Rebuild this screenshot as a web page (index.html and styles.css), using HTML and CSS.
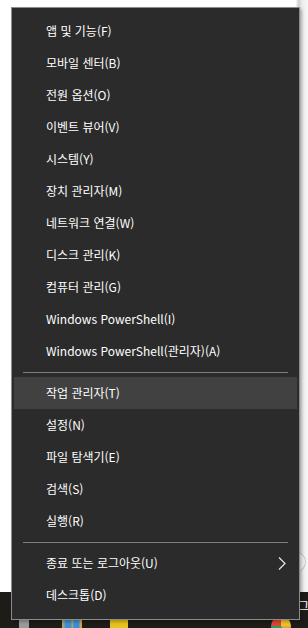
FILE: index.html
```html
<!DOCTYPE html>
<html lang="ko">
<head>
    <meta charset="UTF-8">
    <meta name="viewport" content="width=device-width, initial-scale=1.0">
    <title>빠른 링크 메뉴</title>
    <link rel="stylesheet" href="styles.css">
</head>
<body>
    <div class="screen">
        <div class="desktop"></div>

        <div class="taskbar">
            <span class="tb-icon tb-gray"></span>
            <span class="tb-icon tb-blue"></span>
            <span class="tb-icon tb-yellow"></span>
            <span class="tb-icon tb-dot"></span>
            <span class="tb-icon tb-chrome"></span>
            <span class="tb-text">그</span>
        </div>

        <span class="bubble"></span>

        <!-- Win+X menu -->
        <nav class="menu">
            <div class="group">
                <div class="item">앱 및 기능(F)</div>
                <div class="item">모바일 센터(B)</div>
                <div class="item">전원 옵션(O)</div>
                <div class="item">이벤트 뷰어(V)</div>
                <div class="item">시스템(Y)</div>
                <div class="item">장치 관리자(M)</div>
                <div class="item">네트워크 연결(W)</div>
                <div class="item">디스크 관리(K)</div>
                <div class="item">컴퓨터 관리(G)</div>
                <div class="item">Windows PowerShell(I)</div>
                <div class="item">Windows PowerShell(관리자)(A)</div>
            </div>
            <div class="separator"></div>
            <div class="group">
                <div class="item active">작업 관리자(T)</div>
                <div class="item">설정(N)</div>
                <div class="item">파일 탐색기(E)</div>
                <div class="item">검색(S)</div>
                <div class="item">실행(R)</div>
            </div>
            <div class="separator"></div>
            <div class="group">
                <div class="item has-sub">
                    종료 또는 로그아웃(U)
                    <svg class="chevron" width="8" height="13" viewBox="0 0 8 13">
                        <path d="M1 0.5 L7 6.5 L1 12.5" fill="none" stroke="#e8e8e8" stroke-width="1.2"/>
                    </svg>
                </div>
                <div class="item">데스크톱(D)</div>
            </div>
        </nav>
    </div>
</body>
</html>
```

FILE: styles.css
```css
html, body {
    margin: 0;
    padding: 0;
}

body {
    font-family: "Noto Sans CJK KR", "Noto Sans", sans-serif;
    background-color: #ffffff;
}

.screen {
    position: relative;
    width: 308px;
    height: 628px;
    overflow: hidden;
    display: flex;
    flex-direction: column;
}

.desktop {
    flex: 1;
    background: linear-gradient(to right, #ffffff 0, #ffffff 296px, #e2e2e2 297px, #d0d0d0 299px, #ececec 302px, #f7f7f7 308px);
}

.taskbar {
    height: 36px;
    background-color: #1d1c19;
    position: relative;
}

.tb-icon {
    position: absolute;
    top: 26px;
    height: 10px;
}

.tb-gray {
    left: 19px;
    width: 10px;
    top: 27px;
    background-color: #9a9a9a;
}

.tb-blue {
    left: 62px;
    width: 20px;
    background: linear-gradient(to right, #c7a35c 0, #3a8fd0 4px, #3a8fd0 9px, #c7a35c 10px, #3a8fd0 12px, #3a8fd0 17px, #c7a35c 18px);
}

.tb-yellow {
    left: 110px;
    width: 18px;
    background-color: #e8c21a;
}

.tb-dot {
    left: 161px;
    width: 2px;
    height: 2px;
    background-color: #9a9a9a;
}

.tb-chrome {
    left: 271px;
    top: 24px;
    width: 20px;
    height: 20px;
    border-radius: 50%;
    background: conic-gradient(#f2c02b 0 25%, #d9a93a 25% 40%, #1ea362 40% 75%, #e24335 75% 100%);
}

.tb-text {
    position: absolute;
    left: 298px;
    top: 7px;
    color: #ffffff;
    font-size: 12px;
    line-height: 14px;
}

.bubble {
    position: absolute;
    left: 288px;
    top: 552px;
    width: 16px;
    height: 18px;
    border-radius: 50%;
    border: 1px solid #c8c8c8;
    background-color: #f2f2f2;
}

.menu {
    position: absolute;
    left: 11px;
    top: 7px;
    width: 283px;
    padding: 7px 2px 8px;
    background-color: #2b2b2b;
    border: 1px solid #8c8c8c;
    box-shadow: 2px 2px 3px rgba(0, 0, 0, 0.25);
}

.item {
    position: relative;
    height: 32px;
    line-height: 32px;
    padding-left: 32px;
    font-size: 12px;
    color: #ffffff;
    white-space: nowrap;
}

.item.active {
    background-color: #414141;
}

.chevron {
    position: absolute;
    left: 264px;
    top: 10px;
}

.separator {
    height: 1px;
    margin: 5px 9px 4px 9px;
    background-color: #7f7f7f;
}
```
